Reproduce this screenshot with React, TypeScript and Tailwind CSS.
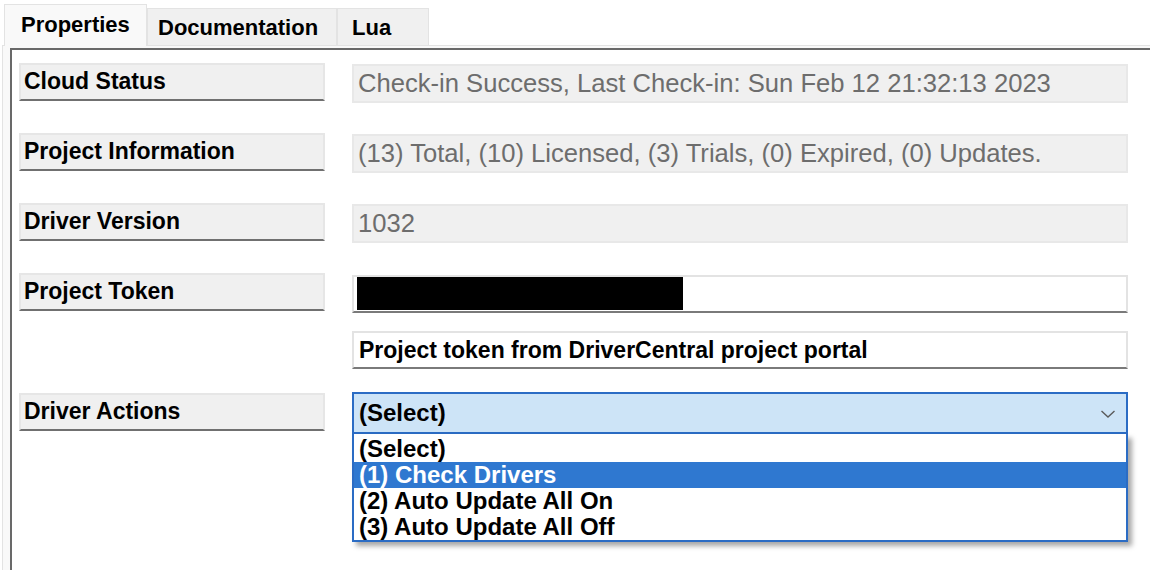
import type { ReactNode } from "react";

const rows = [
  { label: "Cloud Status", value: "Check-in Success, Last Check-in: Sun Feb 12 21:32:13 2023", gap: "mt-0" },
  { label: "Project Information", value: "(13) Total, (10) Licensed, (3) Trials, (0) Expired, (0) Updates.", gap: "mt-[30px]" },
  { label: "Driver Version", value: "1032", gap: "mt-[30px]" },
];

const actions = ["(Select)", "(1) Check Drivers", "(2) Auto Update All On", "(3) Auto Update All Off"];

function App() {
  return (
    <div className="w-[1150px] h-[570px] bg-white overflow-hidden flex flex-col pl-[2px] pt-[4px] font-['Liberation_Sans',Arial,sans-serif] text-black">
      {/* Tab strip */}
      <div className="flex items-end h-[41px] pl-[2px] relative z-10">
        <Tab active className="w-[143px] pl-[16px]">Properties</Tab>
        <Tab className="w-[190px] pl-[10px]">Documentation</Tab>
        <Tab className="w-[92px] pl-[14px]">Lua</Tab>
      </div>

      {/* Tab page */}
      <div className="flex-1 border-l border-t border-[#e3e3e3] bg-[#f9f9f9] pl-[7px] pt-[2px]">
        <div className="h-full border-l-2 border-t-2 border-[#696969] bg-white pl-[7px] pt-[13px]">
          {rows.map((r) => (
            <Row key={r.label} label={r.label} className={r.gap}>
              <div className="mt-[1px] w-[776px] h-[39px] border-2 border-[#e8e8e8] bg-[#f0f0f0] pl-[4px] flex items-center text-[25.6px] text-[#6d6d6d] whitespace-nowrap">
                {r.value}
              </div>
            </Row>
          ))}

          <Row label="Project Token" className="mt-[30px]">
            <div className="mt-[2px] w-[776px] h-[38px] border-2 border-[#e3e3e3] border-b-[#7a7a7a] bg-white pl-[3px]">
              <div className="w-[326px] h-[33px] bg-black" />
            </div>
          </Row>

          <div className="mt-[18px] ml-[333px] w-[776px] h-[38px] border-2 border-[#e3e3e3] border-b-[#7a7a7a] bg-white pl-[5px] flex items-center text-[23px] font-bold whitespace-nowrap">
            Project token from DriverCentral project portal
          </div>

          <Row label="Driver Actions" className="mt-[24px]">
            <div className="relative -mt-[1px] w-[776px]">
              <div className="h-[42px] border-2 border-[#2b6cc4] bg-[#cde4f7] pl-[5px] pr-[10px] flex items-center justify-between text-[24px] font-bold">
                <span>(Select)</span>
                <svg width="16" height="10" viewBox="0 0 16 10" className="mt-[2px]">
                  <path d="M1.5 2 L8 8 L14.5 2" fill="none" stroke="#5a5a5a" strokeWidth="1.4" />
                </svg>
              </div>
              <div className="absolute left-0 top-full w-full border-2 border-t-0 border-[#2b6cc4] bg-white pt-[2px] shadow-[4px_4px_5px_rgba(0,0,0,0.35)]">
                {actions.map((a, i) => (
                  <div
                    key={a}
                    className={
                      "h-[26px] leading-[26px] pl-[5px] text-[24px] font-bold whitespace-nowrap " +
                      (i === 1 ? "bg-[#2f78d0] text-white" : "text-black")
                    }
                  >
                    {a}
                  </div>
                ))}
              </div>
            </div>
          </Row>
        </div>
      </div>
    </div>
  );
}

export default App;

function Tab({ active, className, children }: { active?: boolean; className: string; children: ReactNode }) {
  return (
    <div
      className={
        "flex items-center border-l border-t border-r border-[#e3e3e3] text-[22px] font-bold whitespace-nowrap " +
        (active ? "h-[42px] -mb-[1px] bg-[#f9f9f9] pb-[2px] " : "h-[37px] bg-[#f0f0f0] ") +
        className
      }
    >
      {children}
    </div>
  );
}

function Row({ label, className, children }: { label: string; className: string; children: ReactNode }) {
  return (
    <div className={"flex items-start gap-[27px] " + className}>
      <div className="w-[306px] h-[38px] border-2 border-[#e6e6e6] border-b-[#707070] bg-[#f0f0f0] pl-[3px] pb-[2px] flex items-center text-[23px] font-bold whitespace-nowrap">
        {label}
      </div>
      {children}
    </div>
  );
}
